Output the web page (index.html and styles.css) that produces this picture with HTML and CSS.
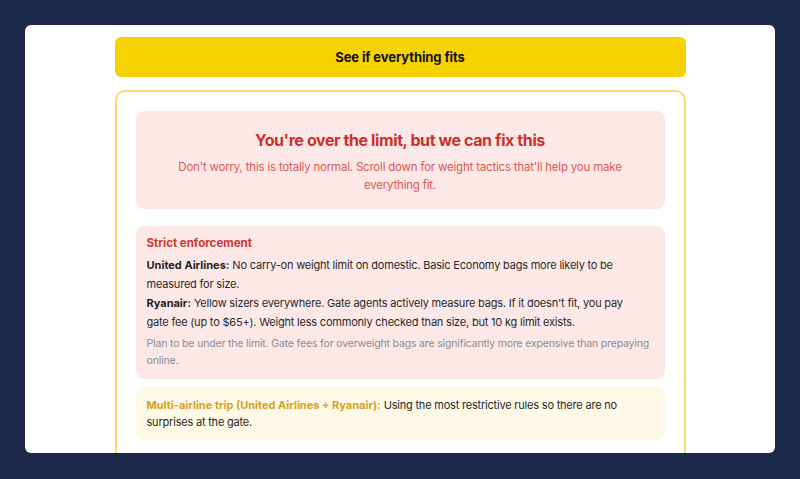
FILE: index.html
```html
<!DOCTYPE html>
<html>
<head>
<meta charset="utf-8">
<link rel="stylesheet" href="styles.css">
</head>
<body>
<div class="card">
  <div class="content">
    <button class="fit-btn">See if everything fits</button>
    <div class="panel">
      <div class="alert">
        <h2 class="alert-title">You're over the limit, but we can fix this</h2>
        <p class="alert-text">Don't worry, this is totally normal. Scroll down for weight tactics that'll help you make everything fit.</p>
      </div>
      <div class="strict">
        <h3 class="strict-title">Strict enforcement</h3>
        <p class="strict-line"><b class="airline">United Airlines:</b> No carry-on weight limit on domestic. Basic Economy bags more likely to be measured for size.</p>
        <p class="strict-line"><b class="airline">Ryanair:</b> Yellow sizers everywhere. Gate agents actively measure bags. If it doesn't fit, you pay gate fee (up to $65+). Weight less commonly checked than size, but 10 kg limit exists.</p>
        <p class="strict-note">Plan to be under the limit. Gate fees for overweight bags are significantly more expensive than prepaying online.</p>
      </div>
      <div class="multi">
        <p class="multi-text"><b class="multi-label">Multi-airline trip (United Airlines + Ryanair):</b> Using the most restrictive rules so there are no surprises at the gate.</p>
      </div>
    </div>
  </div>
</div>
</body>
</html>
```
FILE: styles.css
```css
html, body {
  margin: 0;
  padding: 0;
}
body {
  background: #1b2a4a;
  padding: 25px;
  font-family: Inter, "Noto Sans", "Liberation Sans", sans-serif;
  height: 479px;
  box-sizing: border-box;
  overflow: hidden;
}
.card {
  background: #ffffff;
  border-radius: 6px;
  height: 428px;
  overflow: hidden;
  padding-top: 12px;
  box-sizing: border-box;
}
.content {
  width: 571px;
  margin: 0 auto;
  display: flex;
  flex-direction: column;
  gap: 13px;
}
.fit-btn {
  height: 40px;
  border: none;
  border-radius: 6px;
  background: #f6d200;
  color: #111111;
  font-family: inherit;
  font-size: 13px;
  font-weight: 700;
  letter-spacing: -0.1px;
  width: 100%;
}
.panel {
  border: 2px solid #f8dc72;
  border-radius: 10px;
  padding: 19px 19px 19px;
  display: flex;
  flex-direction: column;
}
.alert {
  background: #fde8e8;
  border-radius: 8px;
  padding: 18px 24px 15px;
  text-align: center;
}
.alert-title {
  margin: 0;
  font-size: 16px;
  line-height: 22px;
  font-weight: 700;
  color: #c8322b;
  letter-spacing: -0.4px;
}
.alert-text {
  margin: 7px 0 0;
  font-size: 11.5px;
  line-height: 18px;
  color: #d95a52;
  letter-spacing: -0.2px;
}
.strict {
  margin-top: 17px;
  background: #fde8e8;
  border-radius: 8px;
  padding: 10px 10px 10px 11px;
}
.strict-title {
  margin: 0 0 6px;
  font-size: 11.5px;
  line-height: 14px;
  font-weight: 700;
  color: #d0372f;
}
.strict-line {
  margin: 0;
  max-width: 492px;
  font-size: 11px;
  line-height: 19px;
  color: #2a2a2a;
  letter-spacing: -0.2px;
}
.airline {
  letter-spacing: 0;
  color: #1f1f1f;
}
.strict-note {
  margin: 3px 0 0;
  font-size: 10.5px;
  line-height: 17px;
  color: #8c8c8c;
  letter-spacing: -0.16px;
}
.multi {
  margin-top: 8px;
  background: #fef8e6;
  border-radius: 8px;
  padding: 10px 10px 9px 11px;
}
.multi-text {
  margin: 0;
  font-size: 11px;
  line-height: 17px;
  color: #2a2a2a;
  letter-spacing: -0.2px;
}
.multi-label {
  color: #d6a21c;
  letter-spacing: 0;
}
```
